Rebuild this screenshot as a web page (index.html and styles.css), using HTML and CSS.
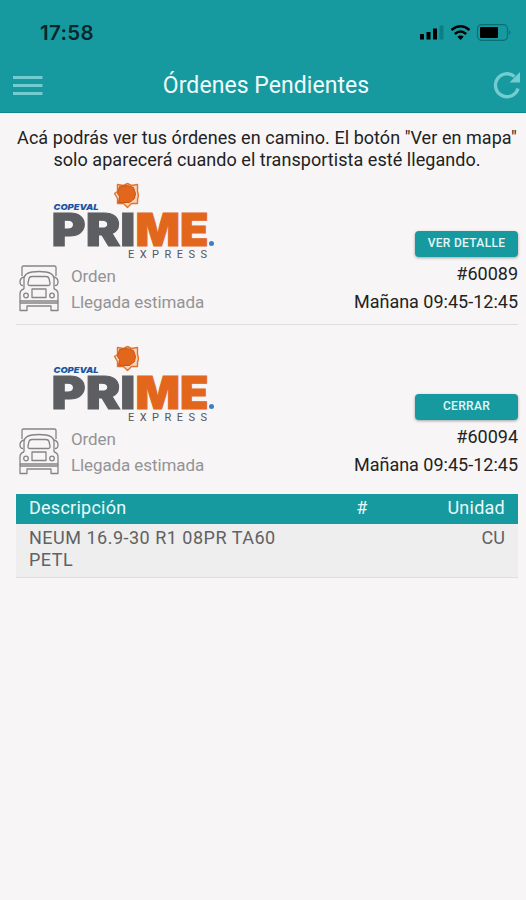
FILE: index.html
```html
<!DOCTYPE html>
<html lang="es">
<head>
  <meta charset="UTF-8">
  <meta name="viewport" content="width=device-width, initial-scale=1.0">
  <title>Órdenes Pendientes</title>
  <link rel="stylesheet" href="styles.css">
</head>
<body>
  <!-- shared drawings -->
  <svg class="defs" width="0" height="0">
    <symbol id="sun" viewBox="0 0 26 26">
      <path d="M4 2L10 3L14 1L18 3L24 2V9L25 13L24 17V21L18 21L14 25L10 21L4 21V16L1 11L4 9Z" fill="#f6d5bf" stroke="#e0742f" stroke-width="1.400" stroke-linejoin="round"/>
      <path d="M6 4L14 3L20 5L22 11L21 16L16 20L9 20L5 20L6 14L4 11Z" fill="#e2661c" stroke="#c9550f" stroke-width="1" stroke-linejoin="round"/>
    </symbol>
    <symbol id="truck" viewBox="0 0 40 48">
      <g fill="none" stroke="#858586" stroke-width="1.300" stroke-linejoin="round">
        <path d="M3 12V3.500Q3 2 4.500 2H35.500Q37 2 37 3.500V12"/>
        <path d="M5 25V14Q6 9 13 8Q20 7 27 8Q34 9 35 14V25"/>
        <path d="M13 12.500H27Q29.500 12.500 30 14.500L31 19Q31.300 21.500 29 21.500H11Q8.700 21.500 9 19L10 14.500Q10.500 12.500 13 12.500Z"/>
        <path d="M5 13Q1 14 1 18Q1 21.500 4 21.500M35 13Q39 14 39 18Q39 21.500 36 21.500"/>
        <path d="M5 25Q1 26 1 30V37H39V30Q39 26 35 25"/>
        <path d="M13 25H27V33.500H13Z"/>
        <circle cx="7" cy="31.500" r="2.300"/>
        <circle cx="33" cy="31.500" r="2.300"/>
        <path d="M1 37V46.500H8V42H32V46.500H39V37M1 39H39"/>
      </g>
    </symbol>
  </svg>

  <header class="header">
    <div class="status-bar">
      <span class="time">17:58</span>
      <svg class="status-icons" width="92" height="20" viewBox="0 0 92 20">
        <path d="M0 12h4v5.500h-4zM6.500 10h4v7.500h-4zM13 6.500h4v11h-4z"/>
        <path d="M19.500 3.500h4V17.500h-4z" fill="#0c7e85"/>
        <g fill="none" stroke="#000" stroke-width="2.400">
          <path d="M31.500 8Q40.500 0.500 49.500 8"/>
          <path d="M34.800 12Q40.500 7 46.200 12"/>
        </g>
        <path d="M37.300 14.800Q40.500 12.300 43.700 14.800L40.500 18z"/>
        <rect x="57.500" y="2.700" width="30" height="15.600" rx="4" fill="none" stroke="#0d6e74" stroke-width="1.200"/>
        <rect x="60" y="5" width="18" height="11" rx="1"/>
        <path d="M89 8Q91.500 10.500 89 13z" fill="#0d6e74"/>
      </svg>
    </div>
    <div class="navbar">
      <svg class="menu" width="30" height="22" viewBox="0 0 30 22">
        <path d="M0 2.500H29.500M0 10.500H29.500M0 18.500H29.500" stroke="#72ccd0" stroke-width="3"/>
      </svg>
      <h1 class="title">Órdenes Pendientes</h1>
      <svg class="refresh" width="28" height="28" viewBox="0 0 28 28">
        <path d="M25 17.500A11.500 11.500 0 1 1 21.500 5.500" fill="none" stroke="#72ccd0" stroke-width="3.400"/>
        <path d="M27 1V11.500H16.500z" fill="#72ccd0"/>
      </svg>
    </div>
  </header>

  <main class="content">
    <p class="intro">Acá podrás ver tus órdenes en camino. El botón "Ver en mapa"<br>solo aparecerá cuando el transportista esté llegando.</p>

    <section class="order">
      <div class="order-top">
        <svg class="logo" width="170" height="84" viewBox="0 0 170 84">
          <use href="#sun" x="60.500" y="6.500" width="26" height="26"/>
          <text class="logo-brand" x="0.5" y="34" textLength="45" lengthAdjust="spacingAndGlyphs">COPEVAL</text>
          <text class="logo-pri" x="-1.500" y="70" textLength="84" lengthAdjust="spacingAndGlyphs">PRI</text>
          <text class="logo-me" x="82.500" y="70" textLength="73" lengthAdjust="spacingAndGlyphs">ME</text>
          <circle cx="158.500" cy="67.500" r="2.500" fill="#3f7fc0"/>
          <text class="logo-express" x="75" y="82" textLength="79">EXPRESS</text>
        </svg>
        <button class="btn">VER DETALLE</button>
      </div>
      <div class="order-info">
        <svg class="truck" width="40" height="48"><use href="#truck"/></svg>
        <div class="labels">
          <p>Orden</p>
          <p>Llegada estimada</p>
        </div>
        <div class="values">
          <p>#60089</p>
          <p>Mañana 09:45-12:45</p>
        </div>
      </div>
    </section>

    <section class="order">
      <div class="order-top">
        <svg class="logo" width="170" height="84" viewBox="0 0 170 84">
          <use href="#sun" x="60.500" y="6.500" width="26" height="26"/>
          <text class="logo-brand" x="0.5" y="34" textLength="45" lengthAdjust="spacingAndGlyphs">COPEVAL</text>
          <text class="logo-pri" x="-1.500" y="70" textLength="84" lengthAdjust="spacingAndGlyphs">PRI</text>
          <text class="logo-me" x="82.500" y="70" textLength="73" lengthAdjust="spacingAndGlyphs">ME</text>
          <circle cx="158.500" cy="67.500" r="2.500" fill="#3f7fc0"/>
          <text class="logo-express" x="75" y="82" textLength="79">EXPRESS</text>
        </svg>
        <button class="btn">CERRAR</button>
      </div>
      <div class="order-info">
        <svg class="truck" width="40" height="48"><use href="#truck"/></svg>
        <div class="labels">
          <p>Orden</p>
          <p>Llegada estimada</p>
        </div>
        <div class="values">
          <p>#60094</p>
          <p>Mañana 09:45-12:45</p>
        </div>
      </div>
    </section>

    <div class="detail">
      <div class="detail-row detail-head">
        <span>Descripción</span>
        <span class="qty">#</span>
        <span class="unit">Unidad</span>
      </div>
      <div class="detail-row detail-body">
        <span class="desc">NEUM 16.9-30 R1 08PR TA60 PETL</span>
        <span class="qty"></span>
        <span class="unit">CU</span>
      </div>
    </div>
  </main>
</body>
</html>
```

FILE: styles.css
```css
* {
  margin: 0;
  padding: 0;
  box-sizing: border-box;
}
body {
  font-family: Roboto, "Liberation Sans", sans-serif;
  background: #f7f5f6;
  color: #222;
  font-size: 17px;
  min-height: 100vh;
}
.defs {
  display: block;
}
.header {
  height: 113px;
  background: #1799a0;
  border-bottom: 1px solid #12868d;
}
.status-bar {
  display: flex;
  justify-content: space-between;
  height: 65px;
  padding: 22px 14px 0 40px;
}
.time {
  font-family: Inter, sans-serif;
  font-size: 20.500px;
  font-weight: 600;
  line-height: 22px;
  letter-spacing: .3px;
  color: #06282a;
}
.navbar {
  display: flex;
  align-items: center;
  justify-content: space-between;
  height: 41px;
  padding: 0 5px 0 13px;
}
.title {
  margin-right: 4px;
  font-size: 23px;
  font-weight: 400;
  letter-spacing: .05px;
  color: #f0fbfb;
}
.refresh {
  margin-top: -1px;
}

.content {
  padding: 14px 8px 0 16px;
}
.intro {
  text-align: center;
  white-space: nowrap;
  font-size: 18px;
  line-height: 21.500px;
  letter-spacing: .05px;
}

/* orders */
.order {
  height: 163.500px;
  padding-top: 1px;
}
.order:first-of-type {
  height: 155px;
  margin-bottom: 8px;
  border-bottom: 1px solid #dfdddf;
}
.order-top {
  display: flex;
  justify-content: space-between;
  align-items: flex-end;
  height: 88px;
  padding-left: 37px;
}
.logo {
  margin-bottom: -1px;
}
.btn {
  width: 103px;
  height: 26px;
  margin-bottom: 2px;
  padding-bottom: 3px;
  border: 0;
  border-radius: 4px;
  background: #1799a0;
  color: #e4f7f7;
  font: 500 12px Roboto, sans-serif;
  letter-spacing: .3px;
  box-shadow: 0 1px 3px rgba(0, 0, 0, .35);
}
.order-info {
  display: flex;
}
.truck {
  margin: 5px 0 0 3px;
}
.labels {
  margin: 4px 0 0 12px;
  line-height: 26px;
  letter-spacing: -.1px;
  color: #949395;
}
.values {
  margin: 1px 0 0 auto;
  text-align: right;
  font-size: 18px;
  line-height: 28px;
}

.logo-brand {
  font: italic 900 8px Inter, sans-serif;
  fill: #1c55a2;
}
.logo-pri,
.logo-me {
  font: 900 45px Inter, sans-serif;
  stroke-width: 1px;
}
.logo-pri {
  fill: #5d5e62;
  stroke: #5d5e62;
}
.logo-me {
  fill: #e2661c;
  stroke: #e2661c;
}
.logo-express {
  font: 400 11px Roboto, sans-serif;
  fill: #55565a;
}

/* detail table */
.detail {
  margin-top: -2.500px;
}
.detail-row {
  display: grid;
  grid-template-columns: 1fr 60px 113px;
  padding: 0 13px;
  font-size: 18px;
}
.detail-head {
  height: 30px;
  line-height: 27px;
  letter-spacing: .25px;
  background: #1799a0;
  color: #e9fafa;
}
.detail-body {
  height: 54px;
  padding-top: 3px;
  line-height: 22px;
  background: #eee;
  border-bottom: 1px solid #dfdfdf;
  color: #626163;
}
.desc {
  max-width: 270px;
  letter-spacing: .5px;
}
.qty {
  text-align: center;
}
.unit {
  text-align: right;
}
```
